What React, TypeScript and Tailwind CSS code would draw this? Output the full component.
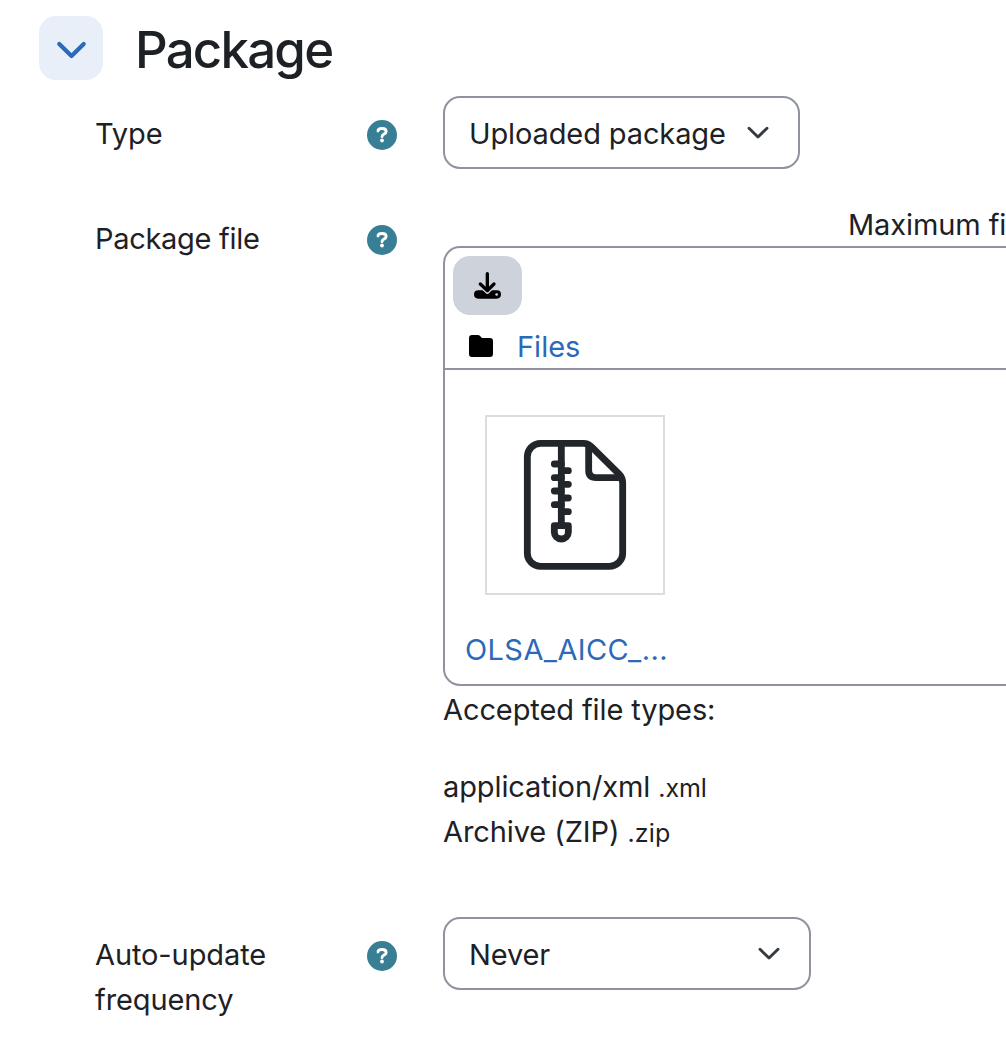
import type { ReactNode } from "react";

function Chevron({ className, width }: { className: string; width: number }) {
  return (
    <svg viewBox="0 0 22 14" className={className} fill="none" stroke="currentColor" strokeWidth={width} strokeLinecap="round" strokeLinejoin="round">
      <path d="M2 2.2 L11 11 L20 2.2" />
    </svg>
  );
}

function Help() {
  return (
    <svg viewBox="0 0 90 90" className="mr-[46px] mt-[9px] h-[30px] w-[30px] shrink-0" role="img" aria-label="Help">
      <circle cx="45" cy="45" r="45" fill="#387f95" />
      <path d="M33 33 C33 27.5 38 25.5 45 25.5 C53 25.5 57.5 29 57.5 34.5 C57.5 42.5 45 42 45 50" fill="none" stroke="#fff" strokeWidth="8.5" strokeLinecap="round" strokeLinejoin="round" />
      <circle cx="45" cy="61.5" r="5.8" fill="#fff" />
    </svg>
  );
}

function Row({ label, className, children }: { label: ReactNode; className: string; children: ReactNode }) {
  return (
    <div className={`flex items-start ${className}`}>
      <div className="flex w-[348px] shrink-0 justify-between pt-[15px] tracking-[-0.1px]">
        <span>{label}</span>
        <Help />
      </div>
      {children}
    </div>
  );
}

function Select({ className, children }: { className: string; children: ReactNode }) {
  return (
    <button className={`flex h-[73px] items-center justify-between rounded-[17px] border-2 border-[#8f939f] pl-[24px] pr-[29px] tracking-[-0.12px] ${className}`}>
      <span className="pt-[2px]">{children}</span>
      <Chevron className="h-[14px] w-[22px] text-[#343a40]" width={2.9} />
    </button>
  );
}

function ZipIcon() {
  return (
    <svg viewBox="21 21 528 528" className="h-[176px] w-[176px]" fill="none" stroke="#22262b" strokeWidth="20.5" strokeLinecap="round" strokeLinejoin="round">
      <path d="M182 100 H311 Q324 100 334 110 L417 192 Q428 203 428 219 V430 A40 39 0 0 1 388 469 H182 A40 39 0 0 1 142 430 V140 A40 40 0 0 1 182 100 Z" />
      <path d="M326 108 V181 Q326 203 348 203 H422" />
      <path d="M244 102 V345" />
      <path d="M223 162 H244 M223 203 H244 M223 243 H244 M223 284 H244 M244 182 H265 M244 223 H265 M244 264 H265 M244 305 H265" />
      <path d="M223 347 H265 V367 A21 20 0 0 1 223 367 Z" />
    </svg>
  );
}

export default function App() {
  return (
    <main className="h-[1050px] w-[1006px] overflow-hidden bg-white font-['Inter',sans-serif] text-[29px] leading-[45px] text-[#1d2125]">
      <header className="flex h-[96px] items-start pl-[39px] pt-[16px]">
        <button aria-label="Collapse" className="flex h-[64px] w-[64px] items-center justify-center rounded-[17px] bg-[#e8eff8]">
          <Chevron className="mt-[4px] h-[19px] w-[31px] text-[#2b69b9]" width={3.1} />
        </button>
        <h2 className="ml-[32px] mt-[2px] text-[51px] font-[550] leading-[64px] tracking-[-1.8px]">Package</h2>
      </header>

      <div className="pl-[95px]">
        <Row className="h-[105px]" label="Type">
          <Select className="w-[357px]">Uploaded package</Select>
        </Row>

        <Row className="h-[716px]" label={<span className="tracking-[-0.3px]">Package file</span>}>
          <div className="w-[563px] shrink-0">
            <div className="h-[45px] whitespace-nowrap pl-[405px] pt-px tracking-[-0.1px]">Maximum fi</div>
            <section className="h-[440px] w-[900px] rounded-[17px] border-2 border-[#8f939f]">
              <div className="h-[122px] border-b-2 border-[#8f939f] pl-[8px] pt-[8px]">
                <button aria-label="Download all" className="flex h-[59px] w-[69px] items-center justify-center rounded-[17px] bg-[#ced3db]">
                  <svg viewBox="0 0 81 81" className="h-[27px] w-[27px]">
                    <path d="M13 55 H26 L40 67 L54 55 H69 Q81 55 81 67 Q81 80 68 80 H13 Q0 80 0 67 Q0 55 13 55 Z" />
                    <path d="M40 5 V57 M19 36 L40 57 L60 36" fill="none" stroke="#ced3db" strokeWidth="15" strokeLinecap="round" strokeLinejoin="round" />
                    <path d="M40 5 V56 M19 36 L40 56 L60 36" fill="none" stroke="#000" strokeWidth="10" strokeLinecap="round" strokeLinejoin="round" />
                    <circle cx="68" cy="67.5" r="4" fill="#ced3db" />
                  </svg>
                </button>
                <div className="mt-[9px] flex items-center pl-[16px]">
                  <svg viewBox="0 0 72 66" className="mb-[2px] h-[22px] w-[24px]">
                    <path d="M9 0 H26 Q31 0 34 4 L38 8 Q40 9 43 9 H63 Q72 9 72 18 V57 Q72 66 63 66 H9 Q0 66 0 57 V9 Q0 0 9 0 Z" />
                  </svg>
                  <a className="ml-[24px] text-[#2b69b9]">Files</a>
                </div>
              </div>
              <div className="pl-[20px] pt-[45px]">
                <div className="ml-[20px] h-[180px] w-[180px] border-2 border-[#dcdcdc]">
                  <ZipIcon />
                </div>
                <a className="mt-[32px] block tracking-[0.4px] text-[#2b69b9]">OLSA_AICC_...</a>
              </div>
            </section>
            <p className="pt-px tracking-[-0.1px]">Accepted file types:</p>
            <ul className="mt-[32px] tracking-[-0.1px]">
              <li className="h-[45px]">application/xml <small className="text-[25px]">.xml</small></li>
              <li className="h-[45px]">Archive (ZIP) <small className="text-[25px] tracking-[0.2px]">.zip</small></li>
            </ul>
          </div>
        </Row>

        <Row className="" label={<>Auto-update<br />frequency</>}>
          <Select className="w-[368px]">Never</Select>
        </Row>
      </div>
    </main>
  );
}
